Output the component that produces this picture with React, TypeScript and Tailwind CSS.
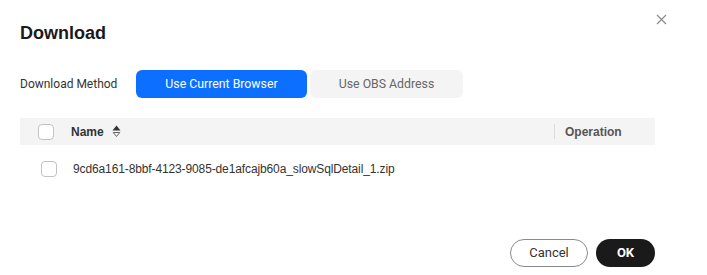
import React from "react";

export default function App() {
  return (
    <div className="relative w-[707px] h-[275px] bg-white overflow-hidden" style={{ fontFamily: '"Liberation Sans", Arial, sans-serif' }}>
      <button className="absolute left-[655px] top-[13px] w-[12px] h-[12px] flex items-center justify-center">
        <svg width="11" height="11" viewBox="0 0 11 11">
          <path d="M1 1 L10 10 M10 1 L1 10" stroke="#8a8a8a" strokeWidth="1.2" />
        </svg>
      </button>
      <div className="px-[20px] pt-[23px]">
        <div className="text-[18px] leading-[20px] font-bold text-[#1a1a1a]">Download</div>
        <div className="mt-[27px] flex items-center h-[28px]">
          <div className="w-[116px] text-[12px] text-[#333]" style={{ fontFamily: 'Roboto, sans-serif' }}>Download Method</div>
          <div className="flex gap-[3px]" style={{ fontFamily: 'Roboto, sans-serif' }}>
            <div className="w-[171px] h-[28px] rounded-[6px] bg-[#0d6fff] text-white text-[12.3px] flex items-center justify-center">Use Current Browser</div>
            <div className="w-[153px] h-[28px] rounded-[6px] bg-[#f4f4f4] text-[#666] text-[12.3px] flex items-center justify-center">Use OBS Address</div>
          </div>
        </div>
        <div className="mt-[20px] w-[635px]">
          <div className="h-[27px] bg-[#f4f4f4] flex items-center">
            <div className="ml-[18px] w-[16px] h-[16px] rounded-[4px] border border-[#c2c2c2] bg-white"></div>
            <div className="ml-[17px] flex items-center gap-[8px] text-[12px] font-bold text-[#333]">
              <span>Name</span>
              <svg width="9" height="13" viewBox="0 0 9 13">
                <path d="M4.5 0.5 L8.5 5.5 L0.5 5.5 Z" fill="#333" />
                <path d="M1.2 7.5 L7.8 7.5 L4.5 11.5 Z" fill="none" stroke="#666" strokeWidth="1" />
              </svg>
            </div>
            <div className="ml-auto w-[101px] flex items-center h-[15px] border-l border-[#dcdcdc] pl-[10px] text-[12px] font-bold text-[#555]">Operation</div>
          </div>
          <div className="h-[48px] flex items-center">
            <div className="ml-[21px] w-[16px] h-[16px] rounded-[4px] border border-[#c2c2c2] bg-white"></div>
            <div className="ml-[16px] text-[12px] tracking-[-0.12px] text-[#333]">9cd6a161-8bbf-4123-9085-de1afcajb60a_slowSqlDetail_1.zip</div>
          </div>
        </div>
        <div className="mt-[46px] w-[635px] flex justify-end gap-[8px]" style={{ fontFamily: 'Roboto, sans-serif' }}>
          <div className="w-[78px] h-[28px] rounded-full border border-[#8a8a8a] text-[13px] text-[#333] flex items-center justify-center">Cancel</div>
          <div className="w-[59px] h-[28px] rounded-full bg-[#1a1a1a] text-[13px] font-bold text-white flex items-center justify-center">OK</div>
        </div>
      </div>
    </div>
  );
}
